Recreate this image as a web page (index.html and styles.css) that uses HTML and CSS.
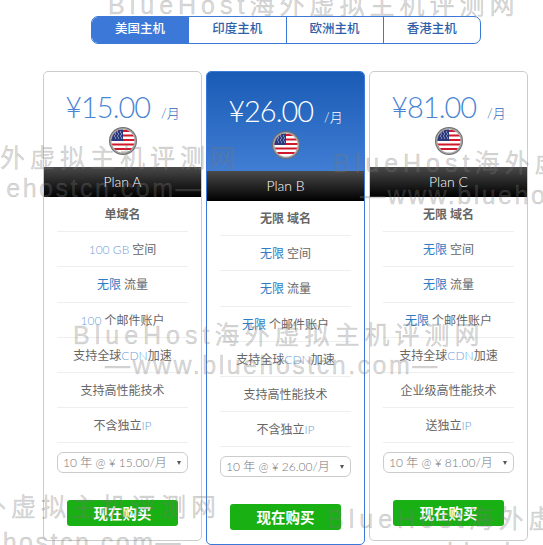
FILE: index.html
```html
<!DOCTYPE html>
<html lang="zh-CN">
<head>
  <meta charset="UTF-8">
  <meta name="viewport" content="width=device-width, initial-scale=1.0">
  <title>BlueHost 主机价格</title>
  <link rel="stylesheet" href="styles.css">
</head>
<body>
<!-- Flag used by all three cards -->
<svg class="defs" width="0" height="0">
  <defs>
    <clipPath id="flagClip"><circle cx="14" cy="14" r="11.5"/></clipPath>
    <symbol id="flag" viewBox="0 0 28 28">
      <circle cx="14" cy="14" r="14" fill="#6f6f6f"/>
      <circle cx="14" cy="14" r="13" fill="#a5a5a5"/>
      <g clip-path="url(#flagClip)">
        <rect width="28" height="28" fill="#fff"/>
        <path d="M0 3h28v2H0zM0 7.500h28v2H0zM0 12h28v2H0zM0 16.500h28v2H0zM0 21h28v2H0z" fill="#d0182c"/>
        <rect x="0" y="0" width="14" height="14" fill="#2a3a7c"/>
        <path d="M5 5h1M8 5h1M11 5h1M6 7h1M9 7h1M12 7h1M5 9h1M8 9h1M11 9h1M6 11h1M9 11h1M12 11h1" stroke="#cfd6ee" stroke-width="1"/>
      </g>
    </symbol>
  </defs>
</svg>

<nav class="tabs">
  <a class="tab active">美国主机</a>
  <a class="tab">印度主机</a>
  <a class="tab">欧洲主机</a>
  <a class="tab">香港主机</a>
</nav>

<div class="plans">
  <div class="card">
    <div class="card-head">
      <div class="price">¥15.00<span class="unit">/月</span></div>
      <svg class="flag"><use href="#flag"/></svg>
      <div class="plan-name">Plan A</div>
    </div>
    <ul class="features">
      <li><b>单域名</b></li>
      <li><span class="num">100 GB</span> 空间</li>
      <li><span class="hl">无限</span> 流量</li>
      <li><span class="num">100</span> 个邮件账户</li>
      <li>支持全球<span class="num">CDN</span>加速</li>
      <li>支持高性能技术</li>
      <li>不含独立<span class="num">IP</span></li>
    </ul>
    <div class="term">
      <select><option>10 年 @ ¥ 15.00/月</option></select>
    </div>
    <a class="buy">现在购买</a>
  </div>

  <div class="card featured">
    <div class="card-head">
      <div class="price">¥26.00<span class="unit">/月</span></div>
      <svg class="flag"><use href="#flag"/></svg>
      <div class="plan-name">Plan B</div>
    </div>
    <ul class="features">
      <li><b>无限 域名</b></li>
      <li><span class="hl">无限</span> 空间</li>
      <li><span class="hl">无限</span> 流量</li>
      <li><span class="hl">无限</span> 个邮件账户</li>
      <li>支持全球<span class="num">CDN</span>加速</li>
      <li>支持高性能技术</li>
      <li>不含独立<span class="num">IP</span></li>
    </ul>
    <div class="term">
      <select><option>10 年 @ ¥ 26.00/月</option></select>
    </div>
    <a class="buy">现在购买</a>
  </div>

  <div class="card">
    <div class="card-head">
      <div class="price">¥81.00<span class="unit">/月</span></div>
      <svg class="flag"><use href="#flag"/></svg>
      <div class="plan-name">Plan C</div>
    </div>
    <ul class="features">
      <li><b>无限 域名</b></li>
      <li><span class="hl">无限</span> 空间</li>
      <li><span class="hl">无限</span> 流量</li>
      <li><span class="hl">无限</span> 个邮件账户</li>
      <li>支持全球<span class="num">CDN</span>加速</li>
      <li>企业级高性能技术</li>
      <li>送独立<span class="num">IP</span></li>
    </ul>
    <div class="term">
      <select><option>10 年 @ ¥ 81.00/月</option></select>
    </div>
    <a class="buy">现在购买</a>
  </div>
</div>

<!-- Watermark lies over the whole page -->
<div class="watermark">
  <span class="wm wm-1">BlueHost海外虚拟主机评测网</span>
  <span class="wm wm-2">外虚拟主机评测网</span>
  <span class="wm wm-3">BlueHost海外虚</span>
  <span class="wm wm-url wm-4">ehostcn.com—</span>
  <span class="wm wm-url wm-5">—www.bluehost</span>
  <span class="wm wm-6">BlueHost海外虚拟主机评测网</span>
  <span class="wm wm-url wm-7">—www.bluehostcn.com—</span>
  <span class="wm wm-8">外虚拟主机评测网</span>
  <span class="wm wm-9">BlueHost海外虚</span>
  <span class="wm wm-url wm-10">hostcn.com—</span>
  <span class="wm wm-url wm-11">—www.bluehost</span>
</div>
</body>
</html>
```

FILE: styles.css
```css
* {
  box-sizing: border-box;
}

html, body {
  height: 545px;
  overflow: hidden;
}

body {
  position: relative;
  margin: 0;
  background-color: #fff;
  color: #666;
  font-family: Lato, "Noto Sans CJK SC", sans-serif;
  font-size: 13px;
}

.defs {
  position: absolute;
}

/* Tabs */
.tabs {
  display: flex;
  width: 390px;
  height: 28px;
  margin: 16px 0 0 91px;
  border: 1px solid #3b78d8;
  border-radius: 7px;
  overflow: hidden;
}

.tab {
  flex: 1;
  line-height: 24px;
  text-align: center;
  font-size: 12.500px;
  font-weight: 500;
  color: #2f5fa8;
  border-left: 1px solid #3b78d8;
}

.tab.active {
  background-color: #3b78d8;
  color: #fff;
  border-left: none;
}

/* Cards */
.plans {
  display: flex;
  align-items: flex-start;
  gap: 4px;
  margin: 27px 0 0 43px;
}

.card {
  width: 159px;
  height: 470px;
  border: 1px solid #ccc;
  border-radius: 5px;
  overflow: hidden;
  background-color: #fff;
  text-align: center;
}

.card-head {
  padding-top: 17px;
}

.price {
  height: 36px;
  line-height: 36px;
  font-size: 29px;
  font-weight: 300;
  letter-spacing: -1px;
  color: #4a86d4;
  white-space: nowrap;
}

.unit {
  margin-left: 11px;
  font-size: 13px;
  letter-spacing: 0;
  color: #2f6ab8;
}

.flag {
  display: block;
  width: 28px;
  height: 28px;
  margin: 2px auto 12px;
}

.plan-name {
  height: 30px;
  line-height: 30px;
  font-size: 14px;
  font-weight: 300;
  color: #fff;
  background: linear-gradient(#4a4a4a, #000);
}

.featured {
  height: 474px;
  border-color: #3b78d8;
}

.featured .card-head {
  padding-top: 21px;
  background: linear-gradient(#1a5bb5, #4c88dd);
}

.featured .price,
.featured .unit {
  color: #fff;
}

/* Feature rows */
.features {
  list-style: none;
  margin: 0 13px;
  padding: 0;
}

.features li {
  height: 35.200px;
  line-height: 35px;
  border-bottom: 1px solid #eee;
  font-size: 12px;
  white-space: nowrap;
}

.features b {
  font-weight: 700;
  color: #666;
}

.hl {
  color: #2f7bc4;
}

.num {
  font-weight: 300;
  color: #6f9fd8;
}

/* Term select and buy button */
.term {
  position: relative;
  margin: 9px 13px 0;
}

.term::after {
  content: "";
  position: absolute;
  top: 9px;
  right: 7px;
  border-top: 4px solid #555;
  border-left: 2.500px solid transparent;
  border-right: 2.500px solid transparent;
}

.term select {
  width: 100%;
  height: 21px;
  padding: 0 5px;
  border: 1px solid #ccc;
  border-radius: 6px;
  background-color: #fff;
  color: #777;
  font-family: Lato, "Noto Sans CJK SC", sans-serif;
  font-size: 12px;
  font-weight: 300;
  appearance: none;
}

.buy {
  display: block;
  width: 111px;
  height: 26px;
  margin: 27px auto 0;
  border-radius: 3px;
  background-color: #19b013;
  color: #fff;
  line-height: 26px;
  font-family: "Noto Sans CJK SC", sans-serif;
  font-size: 14.500px;
  font-weight: 700;
}

/* Watermark */
.watermark {
  position: absolute;
  top: 0;
  left: 0;
  width: 543px;
  height: 545px;
  overflow: hidden;
  pointer-events: none;
}

.wm {
  position: absolute;
  font-family: "Liberation Sans", "Noto Sans CJK SC", sans-serif;
  font-size: 25px;
  letter-spacing: 5px;
  line-height: 26px;
  white-space: nowrap;
  color: rgba(120, 120, 120, 0.3);
  -webkit-text-stroke: 0.4px rgba(120, 120, 120, 0.3);
}

.wm-url {
  letter-spacing: 2.500px;
}

.wm-1 { left: 108px; top: -8px; }
.wm-2 { right: 303px; top: 145px; }
.wm-3 { left: 333px; top: 150px; }
.wm-4 { right: 340px; top: 175px; }
.wm-5 { left: 360px; top: 182px; }
.wm-6 { left: 73px; top: 322px; }
.wm-7 { left: 105px; top: 352px; }
.wm-8 { right: 322px; top: 494px; }
.wm-9 { left: 327px; top: 506px; }
.wm-10 { right: 360px; top: 529px; }
.wm-11 { left: 350px; top: 539px; }
```
